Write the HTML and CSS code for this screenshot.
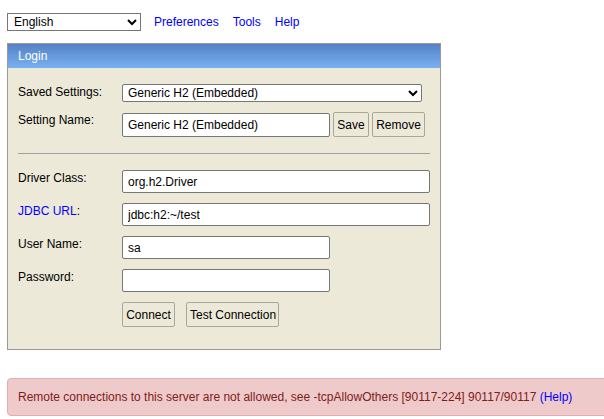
FILE: index.html
```html
<!DOCTYPE html>
<html>
<head>
<meta charset="utf-8">
<link rel="stylesheet" href="styles.css">
</head>
<body>
<div class="topbar">
  <select class="lang"><option>English</option></select>
  <a class="toplink" href="#">Preferences</a>
  <a class="toplink" href="#">Tools</a>
  <a class="toplink" href="#">Help</a>
</div>
<div class="panel">
  <div class="panel-title">Login</div>
  <div class="panel-body">
    <div class="row row-saved">
      <span class="label">Saved Settings:</span>
      <select class="saved"><option>Generic H2 (Embedded)</option></select>
    </div>
    <div class="row row-name">
      <span class="label">Setting Name:</span>
      <input class="field short" type="text" value="Generic H2 (Embedded)">
      <button class="btn btn-save">Save</button>
      <button class="btn btn-remove">Remove</button>
    </div>
    <hr class="sep">
    <div class="row">
      <span class="label">Driver Class:</span>
      <input class="field long" type="text" value="org.h2.Driver">
    </div>
    <div class="row">
      <span class="label"><a class="link" href="#">JDBC URL</a>:</span>
      <input class="field long" type="text" value="jdbc:h2:~/test">
    </div>
    <div class="row">
      <span class="label">User Name:</span>
      <input class="field short" type="text" value="sa">
    </div>
    <div class="row">
      <span class="label">Password:</span>
      <input class="field short" type="password" value="">
    </div>
    <div class="row row-actions">
      <span class="label"></span>
      <button class="btn btn-connect">Connect</button>
      <button class="btn btn-test">Test Connection</button>
    </div>
  </div>
</div>
<div class="alert">Remote connections to this server are not allowed, see -tcpAllowOthers [90117-224] 90117/90117 <a class="link" href="#">(Help)</a></div>
</body>
</html>
```

FILE: styles.css
```css
html, body {
  overflow: hidden;
}
body {
  margin: 0;
  padding: 13px 0 0 7px;
  font-family: "Liberation Sans", Arial, sans-serif;
  font-size: 12px;
  color: #000;
  background: #fff;
}
.topbar {
  display: flex;
  align-items: center;
  height: 18px;
}
.lang {
  width: 134px;
  height: 18px;
  margin: 0 13px 0 0;
  font-family: "Liberation Sans", Arial, sans-serif;
  font-size: 12px;
  border: 1px solid #767676;
  border-radius: 0;
  background: #fff;
  color: #000;
  padding: 0 0 0 2px;
}
.toplink {
  color: #0000ff;
  text-decoration: none;
  margin-right: 14px;
}
.link {
  color: #0000ff;
  text-decoration: none;
}
.panel {
  margin-top: 12px;
  width: 432px;
  border: 1px solid #9c9a8a;
  background: #ece9d8;
}
.panel-title {
  height: 24px;
  line-height: 24px;
  padding-left: 10px;
  color: #fff;
  background: linear-gradient(to bottom, #5581c6, #79b1f2);
}
.panel-body {
  padding: 16px 10px 22px 10px;
}
.row {
  display: flex;
  align-items: flex-start;
  margin-bottom: 10px;
}
.label {
  width: 104px;
  flex: none;
  padding-top: 1px;
}
.saved {
  width: 300px;
  height: 18px;
  font-family: "Liberation Sans", Arial, sans-serif;
  font-size: 12px;
  border: 1px solid #767676;
  border-radius: 2px;
  background: #fff;
  color: #000;
  padding: 0 0 0 1px;
  margin: 0;
}
.row-saved {
  margin-bottom: 10px;
  margin-top: 0;
}
.field {
  box-sizing: border-box;
  height: 23px;
  margin: 0;
  padding: 0 5px;
  font-family: "Liberation Sans", Arial, sans-serif;
  font-size: 12px;
  color: #000;
  background: #fff;
  border: 1px solid #767676;
  border-radius: 2px;
}
.short { width: 208px; }
.long { width: 308px; }
.row-name .field {
  height: 24px;
  margin-top: 1px;
}
.btn {
  box-sizing: border-box;
  height: 25px;
  margin: 0;
  padding: 0 3px;
  white-space: nowrap;
  font-family: "Liberation Sans", Arial, sans-serif;
  font-size: 12px;
  color: #000;
  background: #ece9d8;
  border: 1px solid #a9a799;
  border-radius: 2px;
}
.btn-save { margin-left: 3px; width: 36px; }
.btn-remove { margin-left: 3px; width: 53px; }
.btn-connect { width: 53px; }
.btn-test { margin-left: 11px; width: 93px; }
.sep {
  margin: 16px 0 16px 0;
  border: 0;
  border-top: 1px solid #a0a0a0;
  height: 0;
}
.row-actions { margin-bottom: 0; }
.alert {
  margin-top: 28px;
  margin-right: -40px;
  height: 36px;
  line-height: 36px;
  padding-left: 10px;
  color: #80201a;
  background: #efcaca;
  border: 1px solid #e2aeb0;
  border-radius: 4px;
}
```
